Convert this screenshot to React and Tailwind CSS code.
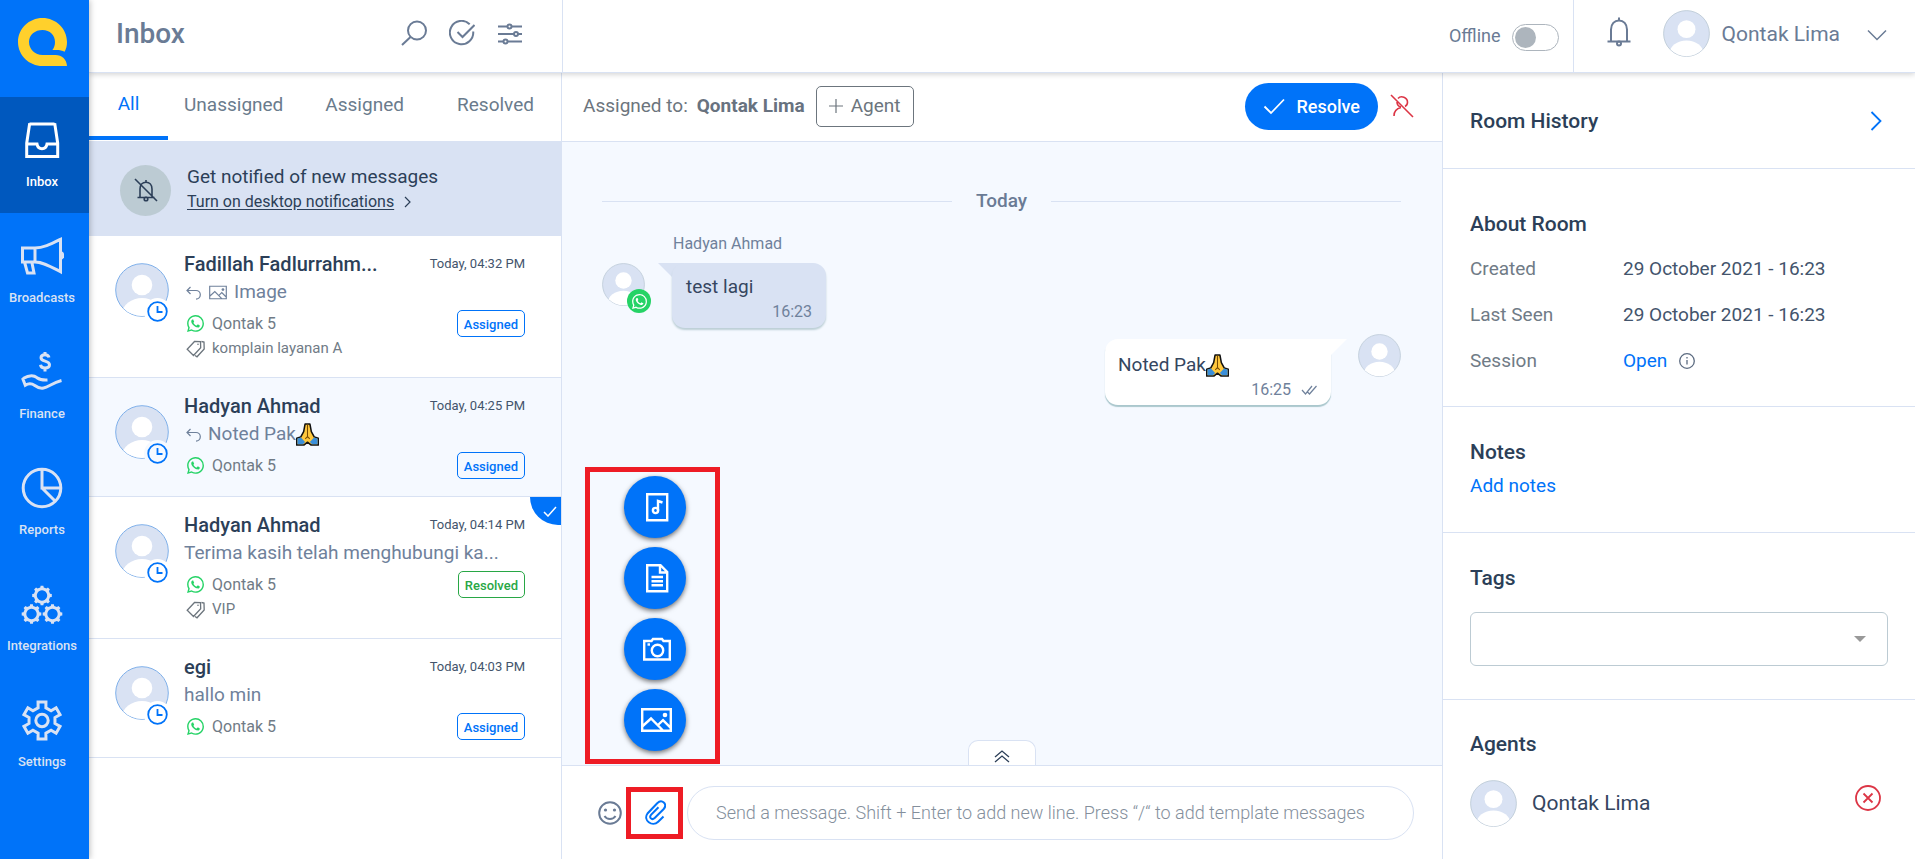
import React from "react";

function polar(cx, cy, r, deg) {
  const a = (deg * Math.PI) / 180;
  return `${(cx + r * Math.cos(a)).toFixed(2)} ${(cy + r * Math.sin(a)).toFixed(2)}`;
}

function gearPath(cx, cy, outer, inner, teeth, tip, root) {
  const step = 360 / teeth;
  const pts = [];
  for (let i = 0; i < teeth; i++) {
    const c = -90 + i * step;
    pts.push(polar(cx, cy, inner, c - root));
    pts.push(polar(cx, cy, outer, c - tip));
    pts.push(polar(cx, cy, outer, c + tip));
    pts.push(polar(cx, cy, inner, c + root));
  }
  return `M${pts.join("L")}Z`;
}

function Svg({ w, h, box, className, sw = 2, children }) {
  return (
    <svg
      width={w}
      height={h || w}
      viewBox={box || `0 0 ${w} ${h || w}`}
      fill="none"
      stroke="currentColor"
      strokeWidth={sw}
      className={"shrink-0 " + (className || "")}
      aria-hidden="true"
    >
      {children}
    </svg>
  );
}

const navIcons = {
  Inbox: (
    <Svg w={44} sw={3}>
      <path d="M9.5 6h25M9.7 5.200l-3 20v13.300h31v-13.300l-3-20M6.500 26h10.500c.5 3 2.500 4.700 5 4.700s4.500-1.700 5-4.700h10.500" />
    </Svg>
  ),
  Broadcasts: (
    <Svg w={44} sw={3}>
      <path d="M2.500 14h12.500c8 0 15-3.500 25.500-8.700v32.400c-10-5.200-17.500-9.700-25.500-9.700h-12.500zM15 14v14M4.500 28l3 11h6.500l-2-10" />
      <path d="M42 17.500a4.500 4.500 0 0 1 0 8z" fill="currentColor" stroke="none" />
    </Svg>
  ),
  Finance: (
    <Svg w={44} sw={3}>
      <path d="M29 7.500c-.5-2-2-2.700-4-2.700-2.500 0-4 1.200-4 3 0 4.500 8.500 2.200 8.500 7 0 2-2 3.200-4.500 3.200-2.300 0-4.200-1-4.500-3.200M25 2v3M25 18v3.500" />
      <path d="M3 28.500c6-3.500 10.500-3.800 14-.8 3 2.200 6 2.600 10.500 2.300M2.500 28l2.800 7.300c4-2.500 7-1.500 9.500.2 3.500 2.600 6 3 8.700 2.500 5-.8 8.500-5 18-7.500" />
    </Svg>
  ),
  Reports: (
    <Svg w={44} sw={3}>
      <circle cx="22" cy="22" r="18.800" />
      <path d="M22 3v19h19M22 22l13.300 13.300" />
    </Svg>
  ),
  Integrations: (
    <Svg w={44} sw={3}>
      <g fill="currentColor" stroke="none" fillRule="evenodd">
        <path d={gearPath(22, 13.5, 9.9, 8.2, 8, 8, 12) + "M22 8.300a5.200 5.200 0 1 0 .01 0Z"} />
        <path d={gearPath(11.5, 32, 9.9, 8.2, 8, 8, 12) + "M11.500 26.800a5.200 5.200 0 1 0 .01 0Z"} />
        <path d={gearPath(32.5, 32, 9.9, 8.2, 8, 8, 12) + "M32.500 26.800a5.200 5.200 0 1 0 .01 0Z"} />
      </g>
    </Svg>
  ),
  Settings: (
    <Svg w={44} sw={3}>
      <path d={gearPath(22, 22.5, 19, 13.3, 6, 12, 17)} />
      <circle cx="22" cy="22.500" r="6.200" />
    </Svg>
  ),
};

function Avatar({ className }) {
  return (
    <svg viewBox="0 0 54 54" className={"block shrink-0 " + className} aria-hidden="true">
      <defs>
        <clipPath id="face">
          <circle cx="27" cy="27" r="26" />
        </clipPath>
      </defs>
      <circle cx="27" cy="27" r="26.300" fill="#d9e2f3" stroke="currentColor" />
      <circle cx="27" cy="22" r="10.300" fill="#fff" />
      <ellipse cx="27" cy="50" rx="19.500" ry="15" fill="#fff" clipPath="url(#face)" />
    </svg>
  );
}

function Pray() {
  return (
    <svg width="23" height="23" viewBox="0 0 24 24" className="inline-block shrink-0" role="img" aria-label="folded hands">
      <path d="M9.500 1h5l1.500 8 3 5.500 4.300 1.500v7h-7.500L12 20l-3.800 3H.700v-7L5 14.500 8 9z" fill="#ffc83d" stroke="#111" strokeWidth="1.600" strokeLinejoin="round" />
      <path d="M1.500 16.300l3.700-1.200 4.300 4.700-2.200 2.400H1.500zM22.500 16.300l-3.700-1.200-4.300 4.700 2.200 2.400h5.800z" fill="#3b8fd9" />
      <path d="M12 1.500v14M9.700 16.500L12 14l2.300 2.500" fill="none" stroke="#7a4b00" strokeWidth="1.100" />
    </svg>
  );
}

function WhatsApp({ size, className }) {
  return (
    <svg width={size} height={size} viewBox="0 0 24 24" fill="currentColor" className={"shrink-0 " + className} aria-hidden="true">
      <path d="M17.472 14.382c-.297-.149-1.758-.867-2.030-.967-.273-.099-.471-.148-.67.150-.197.297-.767.966-.94 1.164-.173.199-.347.223-.644.075-.297-.150-1.255-.463-2.390-1.475-.883-.788-1.480-1.761-1.653-2.059-.173-.297-.018-.458.130-.606.134-.133.298-.347.446-.520.149-.174.198-.298.298-.497.099-.198.050-.371-.025-.520-.075-.149-.669-1.612-.916-2.207-.242-.579-.487-.500-.669-.510-.173-.008-.371-.010-.570-.010-.198 0-.520.074-.792.372-.272.297-1.040 1.016-1.040 2.479 0 1.462 1.065 2.875 1.213 3.074.149.198 2.096 3.200 5.077 4.487.709.306 1.262.489 1.694.625.712.227 1.360.195 1.871.118.571-.085 1.758-.719 2.006-1.413.248-.694.248-1.289.173-1.413-.074-.124-.272-.198-.570-.347m-5.421 7.403h-.004a9.870 9.870 0 01-5.031-1.378l-.361-.214-3.741.982.998-3.648-.235-.374a9.860 9.860 0 01-1.510-5.260c.001-5.450 4.436-9.884 9.888-9.884 2.640 0 5.122 1.030 6.988 2.898a9.825 9.825 0 012.893 6.994c-.003 5.450-4.437 9.884-9.885 9.884m8.413-18.297A11.815 11.815 0 0012.050 0C5.495 0 .160 5.335.157 11.892c0 2.096.547 4.142 1.588 5.945L.057 24l6.305-1.654a11.882 11.882 0 005.683 1.448h.005c6.554 0 11.890-5.335 11.893-11.893a11.821 11.821 0 00-3.480-8.413z" />
    </svg>
  );
}

function Picture({ className, w, h, sw }) {
  return (
    <Svg w={w} h={h} box="0 0 31 24" sw={sw} className={className}>
      <path d="M1.200 1.200h28.600v21.600H1.200zM1.200 18.500l8.800-8 12 12M17.500 16.500l4.500-4.300 8 8" />
      <circle cx="24" cy="7" r="2.300" fill="currentColor" stroke="none" />
    </Svg>
  );
}

function Reply() {
  return (
    <Svg w={15} h={14} sw={1.2} className="ml-0.5">
      <path d="M4.500 1L1 4.500 4.500 8M1 4.500h9a4.300 4.300 0 0 1 0 8.600" />
    </Svg>
  );
}

function TagIcon() {
  return (
    <Svg w={19} h={18} sw={1.3} className="text-[#6c757d]">
      <path d="M8.500 1.500l6 .2.200 6L7.500 15.500 1.200 9.200zM15.500 1.500l2.500.5.200 7-7.200 7.800-2-1.300" />
      <circle cx="12" cy="4.300" r=".8" fill="currentColor" stroke="none" />
    </Svg>
  );
}

const rooms = [
  { name: "Fadillah Fadlurrahm...", time: "04:32 PM", kind: "image", text: "Image", tag: "komplain layanan A", status: "Assigned" },
  { name: "Hadyan Ahmad", time: "04:25 PM", kind: "pray", text: "Noted Pak", status: "Assigned", active: true },
  { name: "Hadyan Ahmad", time: "04:14 PM", text: "Terima kasih telah menghubungi ka...", tag: "VIP", status: "Resolved", checked: true },
  { name: "egi", time: "04:03 PM", text: "hallo min", status: "Assigned" },
];

function Room({ r }) {
  return (
    <li
      className={
        "relative flex gap-[15px] border-b border-[#d9e2f3] pt-[14px] pr-9 pb-[17px] pl-[26px] " +
        (r.active ? "bg-[#f5f9ff]" : "bg-white")
      }
    >
      <div className="relative mt-[13px] h-[54px] w-[54px] shrink-0">
        <Avatar className="h-[54px] w-[54px] text-[#7fb0ea]" />
        <span
          className={
            "absolute -right-0.5 -bottom-2 rounded-full p-[3px] text-[#0073f9] " + (r.active ? "bg-[#f5f9ff]" : "bg-white")
          }
        >
          <Svg w={21} sw={1.8}>
            <circle cx="10.500" cy="10.500" r="9.300" />
            <path d="M10.500 5v6h5" />
          </Svg>
        </span>
      </div>
      <div className="min-w-0 flex-1">
        <div className="flex h-7 items-center justify-between">
          <h3 className="text-[20px] font-medium text-[#2c3f58]">{r.name}</h3>
          <time className="text-[13px] text-[#43546c]">Today, {r.time}</time>
        </div>
        <p className="flex h-[29px] items-center text-[19px] text-[#6f819b]">
          {r.kind && <Reply />}
          {r.kind === "image" && <Picture w={18} h={15} sw={2} className="ml-2" />}
          <span className={r.kind ? "ml-[7px]" : ""}>{r.text}</span>
          {r.kind === "pray" && <Pray />}
        </p>
        <div className="flex items-center justify-between pt-[3px]">
          <span className="flex items-center gap-2 pl-[3px] text-[16px] text-[#707b86]">
            <WhatsApp size={17} className="text-[#25d366]" />
            Qontak 5
          </span>
          <span
            className={
              "flex h-[27px] items-center rounded-[5px] border px-1.5 pt-0.5 text-[13px] font-medium " +
              (r.status === "Resolved" ? "border-[#28a745] text-[#28a745]" : "border-[#0073f9] text-[#0073f9]")
            }
          >
            {r.status}
          </span>
        </div>
        {r.tag && (
          <p className="flex h-[23px] items-center gap-[7px] pl-0.5 text-[15px] text-[#707b86]">
            <TagIcon />
            {r.tag}
          </p>
        )}
      </div>
      {r.checked && (
        <span className="absolute top-0 right-0 flex h-7 w-[31px] items-center justify-end rounded-bl-[28px] bg-[#0073f9] pr-1 text-white">
          <Svg w={14} h={11} sw={1.5}>
            <path d="M1 6l4 4 8-9" />
          </Svg>
        </span>
      )}
    </li>
  );
}

function Sidebar() {
  return (
    <nav className="relative z-20 flex w-[89px] shrink-0 flex-col bg-[#0073f9] shadow-[1px_0_6px_rgba(0,0,0,0.25)]">
      <a href="#home" aria-label="Home" className="flex h-[97px] pt-[18px] pl-[18px]">
        <svg width="49" height="48" viewBox="0 0 49 48" aria-hidden="true">
          <path
            d="M24.500 0C11 0 0 10.700 0 24s11 24 24.500 24H49c-.3-6.500-5-11-11.500-11H24.500C17 37 11 31.200 11 24s6-12 13.500-12S37 17.200 37 24c0 3.200-.8 5.800-2.600 8h4c3.400 0 6 .5 8.200 1.800C48.200 31 49 27.700 49 24 49 10.700 38 0 24.500 0z"
            fill="#ffd02c"
          />
        </svg>
      </a>
      {Object.keys(navIcons).map((n) => (
        <a
          key={n}
          href={"#" + n.toLowerCase()}
          className={
            "flex h-[116px] flex-col items-center pt-[21px] pr-[5px] text-[13px] font-medium " +
            (n === "Inbox" ? "bg-[#0058be] text-white" : "text-[#d9e2f3]")
          }
        >
          {navIcons[n]}
          <span className="mt-2.5">{n}</span>
        </a>
      ))}
    </nav>
  );
}

function Header() {
  return (
    <header className="relative z-10 flex h-[73px] shrink-0 border-b border-[#d9e2f3] bg-white text-[#6a7b95] shadow-[0_1px_6px_rgba(0,0,0,0.2)]">
      <div className="flex w-[474px] shrink-0 items-start justify-between border-r border-[#d9e2f3] pt-[14px] pr-[39px] pl-[27px]">
        <h1 className="text-[28px] leading-10 font-medium">Inbox</h1>
        <div className="flex gap-[22px] pt-1.5">
          <button aria-label="Search">
            <Svg w={26} sw={2}>
              <circle cx="16" cy="10.500" r="9" />
              <path d="M9.500 17l-8.500 8" />
            </Svg>
          </button>
          <button aria-label="Select">
            <Svg w={26} sw={2}>
              <path d="M24.200 11.500a11.700 11.700 0 1 1-3.500-7.300M8.500 12l5 5L25.500 5" />
            </Svg>
          </button>
          <button aria-label="Filter">
            <Svg w={26} sw={2}>
              <path d="M1 6.500h9.500M14.500 6.500H25M1 14h16M21 14h4M1 21.500h5.500M10.500 21.500H25" />
              <circle cx="12.500" cy="6.500" r="2" />
              <circle cx="19" cy="14" r="2" />
              <circle cx="8.500" cy="21.500" r="2" />
            </Svg>
          </button>
        </div>
      </div>
      <div className="flex flex-1 justify-end">
        <label className="flex items-start gap-[11px] border-r border-[#d9e2f3] pr-[14px] text-[18px]">
          <span className="pt-[22px]">Offline</span>
          <input
            type="checkbox"
            className="mt-6 block h-[27px] w-[47px] appearance-none rounded-full border border-[#adb5bd] p-0.5 before:block before:h-[21px] before:w-[21px] before:rounded-full before:bg-[#adb5bd] before:content-['']"
          />
        </label>
        <button aria-label="Notifications" className="mr-8 ml-[33px] flex self-start pt-[17px]">
          <Svg w={24} h={30} sw={2}>
            <path d="M4 24V12.500C4 7 7.500 3.500 12 3.500s8 3.500 8 9V24M.5 24.500h23M12 .5v3" />
            <circle cx="12" cy="26.500" r="2" />
          </Svg>
        </button>
        <button className="flex items-start pr-7">
          <Avatar className="mt-2.5 h-[47px] w-[47px] text-[#bccad6]" />
          <span className="ml-3 pt-[19px] text-[21px]">Qontak Lima</span>
          <Svg w={20} h={12} sw={1.5} className="mt-[29px] ml-[27px]">
            <path d="M1 1.500l9 9 9-9" />
          </Svg>
        </button>
      </div>
    </header>
  );
}

function RoomList() {
  return (
    <section className="flex w-[473px] shrink-0 flex-col border-r border-[#d9e2f3]">
      <div className="flex h-[68px] text-[19px] text-[#6a7b8c]">
        <button className="h-[67px] w-[79px] border-b-4 border-[#0073f9] text-[#0073f9]">All</button>
        <button className="pr-[22px] pl-4 pb-1">Unassigned</button>
        <button className="px-5 pb-1">Assigned</button>
        <button className="ml-auto pr-[27px] pb-1">Resolved</button>
      </div>
      <div className="flex h-[95px] items-center gap-4 bg-[#d9e2f3] pt-[3px] pl-[31px] text-[#2c3f58]">
        <span className="flex h-[51px] w-[51px] items-center justify-center rounded-full bg-[#bccbd3]">
          <Svg w={24} sw={1.6}>
            <path d="M6 19.500V11c0-4 2.500-6.800 6-6.800s6 2.800 6 6.800v8.500M3.500 19.500h17M12 2v2M1 1l22 22" />
            <circle cx="12" cy="21" r="1.800" />
          </Svg>
        </span>
        <div className="pb-[3px]">
          <p className="text-[19px] leading-[26px]">Get notified of new messages</p>
          <a href="#notifications" className="flex items-center gap-2.5 text-[16px] leading-6">
            <span className="underline underline-offset-2">Turn on desktop notifications</span>
            <Svg w={7} h={12} sw={1.2}>
              <path d="M1 1l5 5-5 5" />
            </Svg>
          </a>
        </div>
      </div>
      <ul>
        {rooms.map((r) => (
          <Room key={r.time} r={r} />
        ))}
      </ul>
    </section>
  );
}

const attachments = [
  {
    label: "Audio",
    icon: (
      <Svg w={32} sw={2.4}>
        <path d="M6.200 3.200h20v26h-20zM17 19.500V10l4.500 1.500" />
        <circle cx="14.500" cy="19.500" r="2.600" />
      </Svg>
    ),
  },
  {
    label: "Document",
    icon: (
      <Svg w={32} sw={2.4}>
        <path d="M6.200 3.200h13.300l6.700 6.800v19.200h-20zM19 3.500v7h7M10.500 15h11.500M10.500 19.200h11.500M10.500 23.300h11.500" />
      </Svg>
    ),
  },
  {
    label: "Camera",
    icon: (
      <Svg w={32} sw={2.4}>
        <path d="M3.200 8h7.300l1.500-2h9l1.500 2h6.300v18.500H3.200z" />
        <circle cx="16.500" cy="17.500" r="5.700" />
        <path d="M6.500 11.500h2.500" />
      </Svg>
    ),
  },
  { label: "Image", icon: <Picture w={31} h={24} sw={2.4} /> },
];

function Chat() {
  return (
    <main className="flex min-w-0 flex-1 flex-col bg-[#f5f9ff]">
      <div className="flex h-[69px] items-center border-b border-[#d9e2f3] bg-white pr-7 pb-0.5 pl-[21px] text-[19px] text-[#6c757d]">
        <span>Assigned to:</span>
        <strong className="ml-[9px] font-bold text-[#68727f]">Qontak Lima</strong>
        <button className="ml-[11px] flex h-[41px] items-center gap-2 rounded-[5px] border border-[#6c757d] px-3">
          <Svg w={14} sw={1.2}>
            <path d="M7 0v14M0 7h14" />
          </Svg>
          Agent
        </button>
        <button className="ml-auto flex h-[47px] items-center gap-3 rounded-full bg-[#0073f9] px-[18px] text-[18px] font-medium text-white">
          <Svg w={22} h={17} sw={1.8}>
            <path d="M1.500 8.500l6.500 6.500L21 1.500" />
          </Svg>
          Resolve
        </button>
        <button aria-label="Unassign" className="ml-3 text-[#dc3545]">
          <Svg w={24} sw={1.6}>
            <path d="M1 1l22 22M8 4.500c3-3.500 9.500-1.200 9.500 3.700 0 2-1 3.500-2.500 4.300M7 8c0 2.500 1.500 4.500 4 5M4 22c0-4.500 2.500-7.500 7-8.500" />
          </Svg>
        </button>
      </div>

      <div className="flex flex-1 flex-col pt-[45px] pr-[41px] pl-10">
        <div className="flex h-7 items-center gap-6 text-[19px] font-medium text-[#6a7b95]">
          <span className="h-px flex-1 bg-[#d9e2f3]" />
          Today
          <span className="h-px flex-1 bg-[#d9e2f3]" />
        </div>
        <div className="mt-[17px] ml-[71px] text-[16px] leading-6 text-[#6f819b]">Hadyan Ahmad</div>
        <div className="mt-[7px] flex items-start">
          <div className="relative">
            <Avatar className="h-[43px] w-[43px] text-[#bccad6]" />
            <span className="absolute -right-1.5 -bottom-[7px] flex h-6 w-6 items-center justify-center rounded-full bg-[#25d366] text-white">
              <WhatsApp size={15} className="" />
            </span>
          </div>
          <svg width="26" height="26" viewBox="0 0 26 26" className="-mr-3 ml-[13px]" aria-hidden="true">
            <path d="M0 0h26v26z" fill="#d9e2f3" />
          </svg>
          <div className="relative w-[154px] rounded-[13px] bg-[#d9e2f3] px-[14px] pt-2.5 pb-[5px] shadow-[0_2px_2px_#bccfd6]">
            <p className="text-[19px] leading-7 text-[#35465f]">test lagi</p>
            <p className="text-right text-[16px] leading-[22px] text-[#6f819b]">16:23</p>
          </div>
        </div>
        <div className="mt-1.5 flex items-start justify-end">
          <div className="mt-[5px] w-[226px] rounded-l-[13px] rounded-br-[13px] bg-white px-[13px] pt-3 pb-1 shadow-[0_2px_1px_#aac7cd]">
            <p className="flex items-center text-[19px] leading-7 text-[#35465f]">
              Noted Pak
              <Pray />
            </p>
            <p className="flex items-center justify-end gap-2.5 text-[16px] leading-[22px] text-[#6f819b]">
              16:25
              <Svg w={17} h={10} sw={1.2}>
                <path d="M1 5l3.500 4L11 1M6.500 7l2 2L15.500 1" />
              </Svg>
            </p>
          </div>
          <svg width="16" height="16" viewBox="0 0 16 16" className="mt-[5px] mr-[11px]" aria-hidden="true">
            <path d="M0 0h16L0 16z" fill="#fff" />
          </svg>
          <Avatar className="h-[43px] w-[43px] text-[#bccad6]" />
        </div>
        <button
          aria-label="Expand"
          className="mt-auto flex h-[25px] w-[68px] items-center justify-center self-center rounded-t-[10px] border border-b-0 border-[#d9e2f3] bg-white pt-1.5 text-[#2c3f58]"
        >
          <Svg w={16} h={13} sw={1.3}>
            <path d="M1 7l7-6 7 6M1 12l7-6 7 6" />
          </Svg>
        </button>
      </div>

      <form className="relative flex h-[94px] shrink-0 items-center border-t border-[#d9e2f3] bg-white pr-7 pl-9">
        <div className="absolute bottom-full left-[23px] mb-0.5 flex w-[135px] flex-col gap-[9px] border-5 border-[#ee1c25] pt-1 pb-2 pl-[34px]">
          {attachments.map((a) => (
            <button
              key={a.label}
              type="button"
              aria-label={a.label}
              className="flex h-[62px] w-[62px] items-center justify-center rounded-full bg-[#0073f9] pl-[3px] text-white shadow-[0_2px_5px_rgba(0,0,0,0.55)]"
            >
              {a.icon}
            </button>
          ))}
        </div>
        <button type="button" aria-label="Emoji" className="text-[#6a7b95]">
          <Svg w={24} sw={2}>
            <circle cx="12" cy="12" r="10.800" />
            <path d="M6.500 15c2.500 4 8.500 4 11 0" />
            <circle cx="7.500" cy="9" r="1.600" fill="currentColor" stroke="none" />
            <circle cx="16.500" cy="9" r="1.600" fill="currentColor" stroke="none" />
          </Svg>
        </button>
        <button
          type="button"
          aria-label="Attach"
          className="ml-1 flex h-[52px] w-[57px] items-center justify-center border-5 border-[#ee1c25] text-[#0073f9]"
        >
          <Svg w={22} h={25} sw={2}>
            <path d="M19.500 16.500l-5.300 5.200c-6 5.800-15.500-1.500-10.700-8.200L13.200 3.200c4.800-4.600 10.600 1 6.500 5.800l-9 9c-3 2.600-6-.4-3.500-3.400l7.300-7.400" />
          </Svg>
        </button>
        <input
          type="text"
          aria-label="Message"
          placeholder="Send a message. Shift + Enter to add new line. Press “/“ to add template messages"
          className="ml-1 h-[54px] min-w-0 flex-1 rounded-full border border-[#d9e2f3] px-7 text-[18px] font-light text-[#35465f] placeholder:text-[#848f9c]"
        />
      </form>
    </main>
  );
}

function Details() {
  const heading = "text-[21px] leading-8 font-medium text-[#2c3f58]";
  const line = "border-b border-[#d9e2f3] pl-[27px]";
  return (
    <aside className="w-[473px] shrink-0 border-l border-[#d9e2f3] bg-white pt-0.5 text-[19px]">
      <div className={line + " flex h-[94px] items-center justify-between pr-[33px] pb-0.5"}>
        <h2 className={heading}>Room History</h2>
        <button aria-label="Open history" className="text-[#0073f9]">
          <Svg w={12} h={20} sw={1.8}>
            <path d="M1.500 1l9 9-9 9" />
          </Svg>
        </button>
      </div>
      <div className={line + " h-[238px] pt-[39px]"}>
        <h2 className={heading}>About Room</h2>
        <dl className="mt-1.5 grid grid-cols-[153px_1fr] leading-[46px] text-[#707b86]">
          <dt>Created</dt>
          <dd className="text-[#43546c]">29 October 2021 - 16:23</dd>
          <dt>Last Seen</dt>
          <dd className="text-[#43546c]">29 October 2021 - 16:23</dd>
          <dt>Session</dt>
          <dd className="flex items-center gap-3 text-[#0073f9]">
            Open
            <Svg w={16} sw={1.3} className="text-[#5c6b80]">
              <circle cx="8" cy="8" r="7.300" />
              <path d="M8 7v4.500M8 4v1.500" />
            </Svg>
          </dd>
        </dl>
      </div>
      <div className={line + " h-[126px] pt-[29px]"}>
        <h2 className={heading}>Notes</h2>
        <a href="#notes" className="mt-0.5 block leading-8 text-[#0073f9]">
          Add notes
        </a>
      </div>
      <div className={line + " h-[167px] pt-[29px] pr-[27px]"}>
        <label htmlFor="tags" className={heading + " block"}>
          Tags
        </label>
        <div className="relative mt-[18px]">
          <select id="tags" className="block h-[54px] w-full appearance-none rounded-md border border-[#bccbd3] bg-white px-3">
            <option></option>
          </select>
          <svg width="12" height="6" viewBox="0 0 12 6" className="pointer-events-none absolute top-6 right-[22px]" aria-hidden="true">
            <path d="M0 0h12L6 6z" fill="#999" />
          </svg>
        </div>
      </div>
      <div className="pt-7 pr-[34px] pl-[27px]">
        <h2 className={heading}>Agents</h2>
        <div className="mt-5 flex items-center">
          <Avatar className="h-[47px] w-[47px] text-[#bccad6]" />
          <span className="ml-[15px] text-[21px] text-[#35465f]">Qontak Lima</span>
          <button aria-label="Remove agent" className="mb-3 ml-auto text-[#dc3545]">
            <Svg w={26} sw={1.8}>
              <circle cx="13" cy="13" r="12" />
              <path d="M8.500 8.500l9 9M17.500 8.500l-9 9" />
            </Svg>
          </button>
        </div>
      </div>
    </aside>
  );
}

export default function App() {
  return (
    <div className="flex min-h-screen bg-white font-['Roboto',sans-serif]">
      <Sidebar />
      <div className="flex min-w-0 flex-1 flex-col">
        <Header />
        <div className="flex flex-1">
          <RoomList />
          <Chat />
          <Details />
        </div>
      </div>
    </div>
  );
}
